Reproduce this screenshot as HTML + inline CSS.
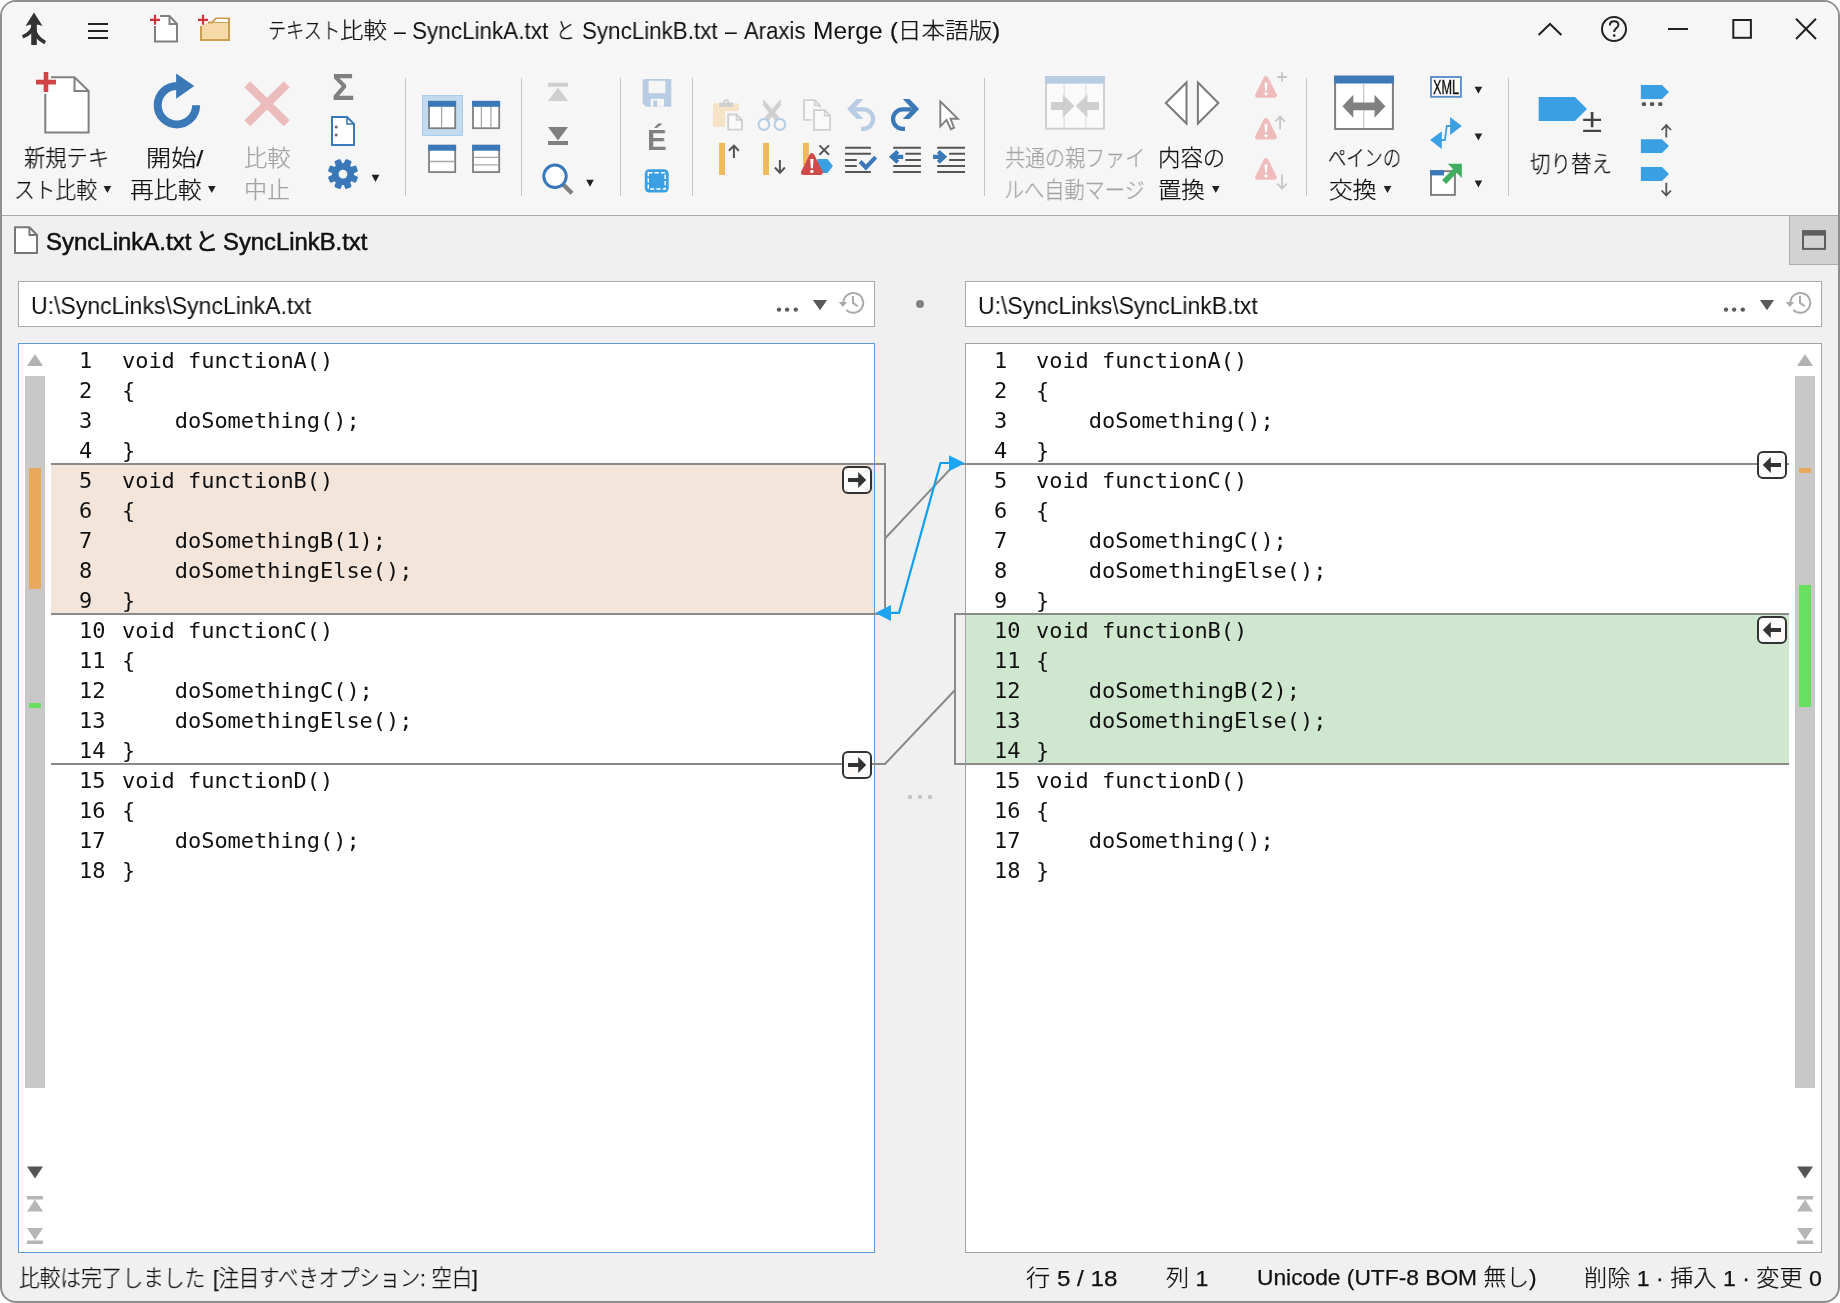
<!DOCTYPE html>
<html lang="ja">
<head>
<meta charset="utf-8">
<title>テキスト比較 – SyncLinkA.txt と SyncLinkB.txt – Araxis Merge (日本語版)</title>
<style>
html,body{margin:0;padding:0;background:#fff;}
body{width:1840px;height:1303px;overflow:hidden;position:relative;
  font-family:"Liberation Sans","Noto Sans CJK JP",sans-serif;color:#111;}
#win{position:absolute;left:0;top:0;width:1840px;height:1303px;box-sizing:border-box;
  border:2px solid #8f8f8f;border-radius:16px;background:#f0f0f0;overflow:hidden;}
#win *{box-sizing:border-box;}
.abs,#win div,#win span,#win svg{position:absolute;}
#top{left:0;top:0;width:1840px;height:216px;background:#f6f6f6;border-bottom:1px solid #ababab;}
#root{left:-2px;top:-2px;width:1840px;height:1303px;}
.t{white-space:pre;line-height:1;transform-origin:0 50%;will-change:transform;}
.ui{font-size:24px;}
.dis{color:#a6a6a6;}
.sep{width:1px;background:#c6c6c6;top:78px;height:118px;}
.mono{font-family:"DejaVu Sans Mono","Liberation Mono",monospace;font-size:22px;line-height:30px;white-space:pre;color:#111;letter-spacing:-0.045px;will-change:transform;}
.pane{background:#fff;border:1px solid #a3a3a3;}
.pathbox{background:#fff;border:1px solid #a9a9a9;height:46px;top:281px;}
.ln{height:2px;background:#8a8a8a;}
.vl{width:2px;background:#8a8a8a;}
.btn{width:30px;height:28px;border:2px solid #333;border-radius:6px;background:#fcfbfa;}
.track{background:#c8c8c8;width:20px;}
</style>
</head>
<body>
<div id="win"><div id="root">
<div id="top"></div>
<!-- ===== title bar icons ===== -->
<svg id="tbicons" style="left:0;top:0;" width="1840" height="60" viewBox="0 0 1840 60">
<!-- app icon : merge arrow -->
<g fill="none" stroke="#333" stroke-linecap="butt">
<path d="M34 22V45" stroke-width="5.6"/>
<path d="M22.600 36.900C29.500 34.300 33.300 30 34 23" stroke-width="3.600"/>
<path d="M45.200 42.600C38.600 39.400 35 35 34.300 28" stroke-width="3.600"/>
</g>
<path d="M34 12.6L42.5 26L38.5 24.8H29.5L25.5 26Z" fill="#333"/>
<!-- hamburger -->
<path d="M88 24H108M88 31H108M88 38H108" stroke="#222" stroke-width="2" fill="none"/>
<!-- new document -->
<path d="M155 26V41.5H177V24L169.5 16H160" fill="#fff"/>
<path d="M155 26V41.5H177V24L169.5 16H160" fill="none" stroke="#808080" stroke-width="2"/>
<path d="M169.5 16V24H177" fill="none" stroke="#808080" stroke-width="2"/>
<path d="M150 19.8H160M155 14.8V24.8" stroke="#d13438" stroke-width="2.2" fill="none"/>
<!-- new folder -->
<path d="M201 26V40H229V18.5H216L212 22.5H208" fill="#f5d9a8" stroke="#c9a052" stroke-width="2"/>
<path d="M216.5 18.5L212.5 22.5H228.5V20.5Q228.5 18.5 226.5 18.5Z" fill="#fff" stroke="#c9a052" stroke-width="1.2"/>
<path d="M198 19.8H208M203 14.8V24.8" stroke="#d13438" stroke-width="2.2" fill="none"/>
<!-- window controls -->
<g fill="none" stroke="#222" stroke-width="2">
<path d="M1538.6 35L1550 24L1561.4 35"/>
<circle cx="1614" cy="29" r="12"/>
<path d="M1668 29H1688"/>
<rect x="1733.3" y="20" width="17.6" height="17.8"/>
<path d="M1796 18.8L1816 39M1816 18.8L1796 39"/>
</g>
<path d="M1609.8 25.6C1609.8 22.6 1611.8 21.3 1614.2 21.3C1616.8 21.3 1618.4 22.8 1618.4 24.9C1618.4 28 1614.2 28.2 1614.2 32" fill="none" stroke="#222" stroke-width="1.9"/>
<circle cx="1614.2" cy="35.6" r="1.3" fill="#222"/>
</svg>
<!-- ===== ribbon separators ===== -->
<div class="sep" style="left:405px;"></div><div class="sep" style="left:521px;"></div><div class="sep" style="left:620px;"></div>
<div class="sep" style="left:692px;"></div><div class="sep" style="left:984px;"></div><div class="sep" style="left:1306px;"></div>
<div class="sep" style="left:1508px;"></div>
<!-- selected layout button background -->
<div style="left:422px;top:95px;width:41px;height:41px;background:#c2dbf0;border:1px solid #a6cdee;"></div>
<!-- ===== ribbon icons, part A ===== -->
<svg id="ribA" style="left:0;top:60px;" width="700" height="156" viewBox="0 60 700 156">
<!-- new text comparison -->
<path d="M45.3 94V132.600H88.600V91L74.500 77.300H51" fill="#fff" stroke="#808080" stroke-width="2"/>
<path d="M74.500 77.300V91H88.600" fill="none" stroke="#808080" stroke-width="2"/>
<path d="M36 82.100H56M46 72.100V92.100" stroke="#d04444" stroke-width="4.6" fill="none"/>
<!-- start / recompare -->
<path d="M176.900 86A19.200 19.200 0 1 0 196.100 105.200" fill="none" stroke="#3a78b8" stroke-width="8"/>
<path d="M176.100 73.500V98.800L194.300 86.100Z" fill="#3a78b8"/>
<!-- stop (disabled) -->
<path d="M247.300 84.300L286.800 123.300M286.800 84.300L247.300 123.300" stroke="#ecbcbc" stroke-width="8.400" fill="none"/>
<!-- dropdown arrows under labels -->
<path d="M103.600 186H111.200L107.400 193Z M208 186H215.600L211.800 193Z" fill="#222"/>
<!-- small doc with dots -->
<path d="M332 117V144.900H354V124L347 117Z" fill="#fff" stroke="#3a78b8" stroke-width="2"/>
<path d="M347 117V124H354" fill="none" stroke="#3a78b8" stroke-width="1.6"/>
<circle cx="336.200" cy="127" r="1.500" fill="#666"/><circle cx="336.200" cy="135" r="1.500" fill="#666"/>
<!-- gear -->
<g transform="translate(343 174.1)" fill="#3a78b8">
<circle r="11"/>
<rect x="-3.4" y="-15.2" width="6.8" height="8" rx="1.6" transform="rotate(22.5)"/><rect x="-3.4" y="-15.2" width="6.8" height="8" rx="1.6" transform="rotate(67.5)"/><rect x="-3.4" y="-15.2" width="6.8" height="8" rx="1.6" transform="rotate(112.5)"/><rect x="-3.4" y="-15.2" width="6.8" height="8" rx="1.6" transform="rotate(157.5)"/><rect x="-3.4" y="-15.2" width="6.8" height="8" rx="1.6" transform="rotate(202.5)"/><rect x="-3.4" y="-15.2" width="6.8" height="8" rx="1.6" transform="rotate(247.5)"/><rect x="-3.4" y="-15.2" width="6.8" height="8" rx="1.6" transform="rotate(292.5)"/><rect x="-3.4" y="-15.2" width="6.8" height="8" rx="1.6" transform="rotate(337.5)"/>
<circle r="4.4" fill="#f6f6f6"/>
</g>
<path d="M371.600 174.800H379.400L375.500 182Z" fill="#222"/>
<!-- layout icons -->
<g stroke="#808080" stroke-width="1.800" fill="#fff">
<rect x="429" y="101.800" width="26.200" height="26.400"/>
<rect x="473" y="101.800" width="26.200" height="26.400"/>
<rect x="429" y="145.700" width="26.200" height="26.400"/>
<rect x="473" y="145.700" width="26.200" height="26.400"/>
</g>
<g fill="#3a78b8">
<rect x="428.100" y="100.900" width="28" height="5.900"/><rect x="472.100" y="100.900" width="28" height="5.900"/>
<rect x="428.100" y="144.800" width="28" height="5.900"/><rect x="472.100" y="144.800" width="28" height="5.900"/>
</g>
<g stroke="#a8a8a8" stroke-width="1.300" fill="none">
<path d="M441.600 107V127.500"/><path d="M481.400 107V127.500M490.900 107V127.500"/>
<path d="M430 161.500H454.500"/><path d="M474 157.300H498.500M474 164.900H498.500"/>
</g>
<!-- previous/next difference -->
<path d="M548 82.800H568V86.700H548Z M558 87.400L568 100.900H548Z" fill="#cfcfcf"/>
<path d="M548 127H568L558 140.500Z M548 141.100H568V144.900H548Z" fill="#808080"/>
<!-- magnifier -->
<path d="M563 184.300L572 193.300" stroke="#808080" stroke-width="4.400" fill="none"/>
<circle cx="555" cy="176.300" r="11.200" fill="#fff" stroke="#3a78b8" stroke-width="3"/>
<path d="M586.200 179.800H593.800L590 186.800Z" fill="#222"/>
<!-- save (disabled) -->
<path d="M642.600 81.100Q642.600 79.100 644.600 79.100H671.300V106.700H646L642.600 103.500Z" fill="#b8cce4"/>
<rect x="648.600" y="80.800" width="16.800" height="12.400" fill="#f6f6f6"/>
<rect x="650.600" y="98.800" width="13.400" height="7.900" fill="#f6f6f6"/>
<rect x="653.200" y="100.600" width="4" height="6.100" fill="#b8cce4"/>
<!-- selection -->
<rect x="644.800" y="169.300" width="23.900" height="23.300" rx="4.500" fill="#3a9fe3"/>
<rect x="648.300" y="172.800" width="16.900" height="16.300" fill="none" stroke="#fff" stroke-width="1.500" stroke-dasharray="4.200 2.100"/>
</svg>
<!-- ===== ribbon icons, part B (edit group) ===== -->
<svg id="ribB" style="left:700px;top:60px;" width="300" height="156" viewBox="700 60 300 156">
<!-- paste (disabled) -->
<rect x="713" y="103.300" width="25.800" height="23.500" rx="1.500" fill="#f6e3c6"/>
<path d="M719.200 107V102.500H723.200Q723.200 99.200 726.200 99.200Q729.200 99.200 729.200 102.500H733.100V107Z" fill="#cfcfcf"/>
<circle cx="726.200" cy="102.100" r="1" fill="#f0f0f0"/>
<rect x="725.200" y="111" width="15" height="17" fill="#f6f6f6"/>
<path d="M728.200 114.500H736.500L741.900 119.900V129.700H728.200Z" fill="#fafafa" stroke="#cfcfcf" stroke-width="1.800"/>
<path d="M736.500 114.500V119.900H741.900" fill="none" stroke="#cfcfcf" stroke-width="1.600"/>
<!-- cut (disabled) -->
<path d="M763.100 99.100V105.600L775.400 121L779.600 117.800Z" fill="#d0d0d0"/>
<path d="M780.800 99.100V105.600L768.500 121L764.300 117.800Z" fill="#d0d0d0"/>
<circle cx="763.900" cy="124.500" r="5.400" fill="#f6f6f6" stroke="#b4cde6" stroke-width="2"/>
<circle cx="779.900" cy="124.500" r="5.400" fill="#f6f6f6" stroke="#b4cde6" stroke-width="2"/>
<!-- copy (disabled) -->
<path d="M804.100 100.100H814.600L820 105.500V119.900H804.100Z" fill="#fafafa" stroke="#cfcfcf" stroke-width="1.800"/>
<path d="M814.600 100.100V105.500H820" fill="none" stroke="#cfcfcf" stroke-width="1.600"/>
<path d="M814.100 110.100H824.600L830.100 115.600V129.800H814.100Z" fill="#f6f6f6" stroke="#f6f6f6" stroke-width="5.200"/>
<path d="M814.100 110.100H824.600L830.100 115.600V129.800H814.100Z" fill="#fafafa" stroke="#cfcfcf" stroke-width="1.800"/>
<path d="M824.600 110.100V115.600H830.100" fill="none" stroke="#cfcfcf" stroke-width="1.600"/>
<!-- undo (disabled) -->
<path d="M854.300 109.300H863.300A9.800 9.800 0 0 1 863.300 128.900H861.100" fill="none" stroke="#b8cce4" stroke-width="4.200"/>
<path d="M863.400 99.100H856.700L847.100 109L856.700 118.900H863.400L853.800 109Z" fill="#b8cce4"/>
<!-- redo -->
<path d="M911.800 109.300H902.800A9.800 9.800 0 0 0 902.800 128.900H905" fill="none" stroke="#3a78b8" stroke-width="4.200"/>
<path d="M902.800 99.100H909.500L919.100 109L909.500 118.900H902.800L912.400 109Z" fill="#3a78b8"/>
<!-- pointer -->
<path d="M940.300 101.500L957.900 118.800H950.500L954.100 127.700L950.900 129.200L946.500 119.900L940.300 126.300Z" fill="#fff" stroke="#808080" stroke-width="1.900" stroke-linejoin="miter"/>
<!-- row 2 -->
<g fill="#f0b95c">
<rect x="719.100" y="142.800" width="5.900" height="32.200"/>
<rect x="763.100" y="142.800" width="5.900" height="32.200"/>
<rect x="803" y="142.800" width="5.900" height="22.500"/>
</g>
<g fill="none" stroke="#555" stroke-width="2">
<path d="M733.900 158V146M728.900 150.800L733.900 145.600L738.900 150.800"/>
<path d="M779.900 160V172M774.900 167.500L779.900 172.700L784.900 167.500"/>
<path d="M819.400 145.400L829 154.700M829 145.400L819.400 154.700"/>
</g>
<path d="M817.400 159.100H827.500L832.900 166L827.500 172.900H817.400Z" fill="#3a9fe3"/>
<path d="M811.900 155.700L820.300 172.400H803.500Z" fill="#d14a4a" stroke="#d14a4a" stroke-width="5" stroke-linejoin="round"/>
<path d="M810.300 159H813.500L812.900 168.300H810.900Z" fill="#fff"/><circle cx="811.900" cy="171.400" r="1.700" fill="#fff"/>
<g fill="none" stroke="#555" stroke-width="2">
<path d="M845.100 147.700H870.900M845.100 153.700H870.900M845.100 159.900H856.800M845.100 165.900H856.800M845.100 172.100H870.900"/>
<path d="M893.200 147.700H920.900M905.400 153.700H920.900M905.400 159.900H920.900M893.200 165.900H920.900M893.200 172.100H920.900"/>
<path d="M937.200 147.700H965M949.100 153.700H965M949.100 159.900H965M937.200 165.900H965M937.200 172.100H965"/>
</g>
<path d="M860.100 161.500L865.900 167.400L875.700 157.100" fill="none" stroke="#3a78b8" stroke-width="4.200"/>
<path d="M888.900 156.800L896.400 149.900L899.300 152.900L897.300 154.700H903.200V158.900H897.300L899.300 160.700L896.400 163.700Z" fill="#3a78b8"/>
<path d="M947.200 156.800L939.700 149.900L936.800 152.900L938.800 154.700H933V158.900H938.800L936.800 160.700L939.700 163.700Z" fill="#3a78b8"/>
</svg>
<!-- ===== ribbon icons, part C (merge / panes / bookmarks) ===== -->
<svg id="ribC" style="left:1000px;top:60px;" width="720" height="156" viewBox="1000 60 720 156">
<!-- auto-merge (disabled) -->
<rect x="1046" y="77" width="58" height="51.700" fill="#fafafa" stroke="#d0d0d0" stroke-width="2"/>
<rect x="1045" y="76" width="60" height="7.700" fill="#b8cce4"/>
<path d="M1064.200 84V128M1085.700 84V128" stroke="#e2e2e2" stroke-width="1.400" fill="none"/>
<path d="M1051 102H1062.800V94.500L1074.400 106L1062.800 117.400V110H1051Z" fill="#cfcfcf"/>
<path d="M1099 102H1087.400V94.500L1075.800 106L1087.400 117.400V110H1099Z" fill="#cfcfcf"/>
<!-- replace contents -->
<path d="M1186.500 82.500V123.500L1165.800 103Z" fill="#fff" stroke="#7a7a7a" stroke-width="2" stroke-linejoin="miter"/>
<path d="M1197.900 82.500V123.500L1218.400 103Z" fill="#fff" stroke="#7a7a7a" stroke-width="2" stroke-linejoin="miter"/>
<path d="M1212 186H1219.600L1215.800 193Z" fill="#222"/>
<!-- conflict icons (disabled) -->
<g fill="#efbcbc" stroke="#efbcbc" stroke-width="5" stroke-linejoin="round">
<path d="M1266 78.700L1274.400 95.300H1257.600Z"/><path d="M1266 120.500L1274.400 137.100H1257.600Z"/><path d="M1266 160.700L1274.400 177.300H1257.600Z"/>
</g>
<g fill="#fff">
<path d="M1264.600 82.500H1267.400L1266.900 90.500H1265.100Z"/><circle cx="1266" cy="93.800" r="1.600"/>
<path d="M1264.600 124.300H1267.400L1266.900 132.300H1265.100Z"/><circle cx="1266" cy="135.600" r="1.600"/>
<path d="M1264.600 164.500H1267.400L1266.900 172.500H1265.100Z"/><circle cx="1266" cy="175.800" r="1.600"/>
</g>
<g fill="none" stroke="#c6c6c6" stroke-width="1.800">
<path d="M1277.300 77H1286.900M1282.100 72.200V81.800"/>
<path d="M1280.100 129.600V117M1275.400 121.500L1280.100 116.600L1284.800 121.500"/>
<path d="M1282 174.600V188M1277.300 183.600L1282 188.500L1286.700 183.600"/>
</g>
<!-- swap panes -->
<rect x="1335.100" y="76.700" width="57.800" height="52.300" fill="#fff" stroke="#808080" stroke-width="2"/>
<rect x="1334.100" y="75.700" width="59.800" height="7.800" fill="#3a78b8"/>
<path d="M1363.700 84V128" stroke="#c8c8c8" stroke-width="1.300" fill="none"/>
<path d="M1342.400 106.300L1353.300 94.800V102.400H1374.500V94.800L1385.400 106.300L1374.500 117.800V110.300H1353.300V117.800Z" fill="#808080"/>
<path d="M1383.700 186H1391.300L1387.500 193Z" fill="#222"/>
<!-- XML -->
<rect x="1431" y="77" width="29.900" height="19.800" fill="#fff" stroke="#5b8fc9" stroke-width="1.900"/>
<!-- sync link arrows -->
<path d="M1461.800 126L1450.100 117.100V134.900Z M1430.100 140.100L1441.800 131.300V149Z" fill="#3a9fe3"/>
<path d="M1451 126H1446.800L1444.900 140.100H1441" fill="none" stroke="#3a9fe3" stroke-width="1.800"/>
<!-- open window -->
<rect x="1431" y="171.200" width="23.900" height="23.700" fill="#fff" stroke="#808080" stroke-width="2"/>
<rect x="1430" y="170.200" width="14" height="5.200" fill="#3a78b8"/>
<path d="M1444.100 182L1456.500 169.400" stroke="#3fae5e" stroke-width="5.600" fill="none"/>
<path d="M1461.800 163.700V177.900L1447.900 163.700Z" fill="#3fae5e"/>
<path d="M1474.600 86.700H1482.200L1478.400 93.700Z M1474.600 133.500H1482.200L1478.400 140.500Z M1474.600 180.600H1482.200L1478.400 187.600Z" fill="#222"/>
<!-- toggle bookmark -->
<path d="M1538.700 97H1575L1587 109L1575 120.900H1538.700Z" fill="#3a9fe3"/>
<!-- bookmark small icons -->
<g fill="#3a9fe3">
<path d="M1640.900 85H1662L1669 92L1662 99.100H1640.900Z"/>
<path d="M1640.900 139.300H1662L1669 146.100L1662 153H1640.900Z"/>
<path d="M1640.900 167H1662L1669 174L1662 180.900H1640.900Z"/>
</g>
<g fill="#555"><rect x="1641.800" y="102.200" width="4.200" height="3.800" rx="1.200"/><rect x="1650" y="102.200" width="4.200" height="3.800" rx="1.200"/><rect x="1658.200" y="102.200" width="4.200" height="3.800" rx="1.200"/></g>
<g fill="none" stroke="#555" stroke-width="1.800">
<path d="M1666.300 137.600V125.500M1661.600 130L1666.300 125.100L1671 130"/>
<path d="M1666.300 182.800V195.200M1661.600 190.500L1666.300 195.400L1671 190.500"/>
</g>
</svg>
<!-- ===== document tab strip ===== -->
<div style="left:1789px;top:216px;width:51px;height:49px;background:#d2d2d2;border-left:1px solid #adadad;border-bottom:1px solid #adadad;"></div>
<svg style="left:0;top:216px;" width="1840" height="50" viewBox="0 216 1840 50">
<path d="M15 227.3H29.5L37 235V253H15Z" fill="#fff" stroke="#777" stroke-width="2"/>
<path d="M29.5 227.3V235H37" fill="none" stroke="#777" stroke-width="2"/>
<rect x="1803" y="233" width="22" height="15.900" fill="none" stroke="#5f5f5f" stroke-width="2"/>
<rect x="1802" y="230.100" width="24" height="5.500" fill="#5f5f5f"/>
</svg>
<!-- ===== path boxes ===== -->
<div class="pathbox" style="left:18px;width:857px;"></div>
<div class="pathbox" style="left:965px;width:857px;"></div>
<svg style="left:0;top:281px;" width="1840" height="46" viewBox="0 281 1840 46">
<g fill="#5a5a5a">
<circle cx="779" cy="309.600" r="2.200"/><circle cx="787.100" cy="309.600" r="2.200"/><circle cx="795.800" cy="309.600" r="2.200"/>
<circle cx="1726" cy="309.600" r="2.200"/><circle cx="1734.100" cy="309.600" r="2.200"/><circle cx="1742.800" cy="309.600" r="2.200"/>
<path d="M812.900 300H827.100L820 310.200Z M1759.900 300H1774.100L1767 310.200Z"/>
</g>
<g fill="none" stroke="#ababab" stroke-width="2">
<path d="M843.400 302.900A9.900 9.900 0 1 1 846.300 309.900"/>
<path d="M853 296.100V302.900L857.700 306.300"/>
<path d="M1790.400 302.900A9.900 9.900 0 1 1 1793.300 309.900"/>
<path d="M1800 296.100V302.900L1804.700 306.300"/>
</g>
<path d="M838.700 301.900H847.100L842.900 306.900Z M1785.700 301.900H1794.100L1789.900 306.900Z" fill="#ababab"/>
</svg>
<!-- ===== PANES ===== -->
<div class="pane" id="lp" style="left:18px;top:343px;width:857px;height:910px;border-color:#5b9ad5;"></div>
<div class="pane" id="rp" style="left:965px;top:343px;width:857px;height:910px;"></div>
<div style="left:51px;top:465px;width:823px;height:148px;background:#f3e5d9;"></div>
<div style="left:966px;top:615px;width:823px;height:148px;background:#d0e7cf;"></div>
<span class="mono" style="left:79px;top:346px;">1</span><span class="mono" style="left:121.5px;top:346px;">void functionA()</span>
<span class="mono" style="left:79px;top:376px;">2</span><span class="mono" style="left:121.5px;top:376px;">{</span>
<span class="mono" style="left:79px;top:406px;">3</span><span class="mono" style="left:121.5px;top:406px;">    doSomething();</span>
<span class="mono" style="left:79px;top:436px;">4</span><span class="mono" style="left:121.5px;top:436px;">}</span>
<span class="mono" style="left:79px;top:466px;">5</span><span class="mono" style="left:121.5px;top:466px;">void functionB()</span>
<span class="mono" style="left:79px;top:496px;">6</span><span class="mono" style="left:121.5px;top:496px;">{</span>
<span class="mono" style="left:79px;top:526px;">7</span><span class="mono" style="left:121.5px;top:526px;">    doSomethingB(1);</span>
<span class="mono" style="left:79px;top:556px;">8</span><span class="mono" style="left:121.5px;top:556px;">    doSomethingElse();</span>
<span class="mono" style="left:79px;top:586px;">9</span><span class="mono" style="left:121.5px;top:586px;">}</span>
<span class="mono" style="left:79px;top:616px;">10</span><span class="mono" style="left:121.5px;top:616px;">void functionC()</span>
<span class="mono" style="left:79px;top:646px;">11</span><span class="mono" style="left:121.5px;top:646px;">{</span>
<span class="mono" style="left:79px;top:676px;">12</span><span class="mono" style="left:121.5px;top:676px;">    doSomethingC();</span>
<span class="mono" style="left:79px;top:706px;">13</span><span class="mono" style="left:121.5px;top:706px;">    doSomethingElse();</span>
<span class="mono" style="left:79px;top:736px;">14</span><span class="mono" style="left:121.5px;top:736px;">}</span>
<span class="mono" style="left:79px;top:766px;">15</span><span class="mono" style="left:121.5px;top:766px;">void functionD()</span>
<span class="mono" style="left:79px;top:796px;">16</span><span class="mono" style="left:121.5px;top:796px;">{</span>
<span class="mono" style="left:79px;top:826px;">17</span><span class="mono" style="left:121.5px;top:826px;">    doSomething();</span>
<span class="mono" style="left:79px;top:856px;">18</span><span class="mono" style="left:121.5px;top:856px;">}</span>
<span class="mono" style="left:993.5px;top:346px;">1</span><span class="mono" style="left:1036px;top:346px;">void functionA()</span>
<span class="mono" style="left:993.5px;top:376px;">2</span><span class="mono" style="left:1036px;top:376px;">{</span>
<span class="mono" style="left:993.5px;top:406px;">3</span><span class="mono" style="left:1036px;top:406px;">    doSomething();</span>
<span class="mono" style="left:993.5px;top:436px;">4</span><span class="mono" style="left:1036px;top:436px;">}</span>
<span class="mono" style="left:993.5px;top:466px;">5</span><span class="mono" style="left:1036px;top:466px;">void functionC()</span>
<span class="mono" style="left:993.5px;top:496px;">6</span><span class="mono" style="left:1036px;top:496px;">{</span>
<span class="mono" style="left:993.5px;top:526px;">7</span><span class="mono" style="left:1036px;top:526px;">    doSomethingC();</span>
<span class="mono" style="left:993.5px;top:556px;">8</span><span class="mono" style="left:1036px;top:556px;">    doSomethingElse();</span>
<span class="mono" style="left:993.5px;top:586px;">9</span><span class="mono" style="left:1036px;top:586px;">}</span>
<span class="mono" style="left:993.5px;top:616px;">10</span><span class="mono" style="left:1036px;top:616px;">void functionB()</span>
<span class="mono" style="left:993.5px;top:646px;">11</span><span class="mono" style="left:1036px;top:646px;">{</span>
<span class="mono" style="left:993.5px;top:676px;">12</span><span class="mono" style="left:1036px;top:676px;">    doSomethingB(2);</span>
<span class="mono" style="left:993.5px;top:706px;">13</span><span class="mono" style="left:1036px;top:706px;">    doSomethingElse();</span>
<span class="mono" style="left:993.5px;top:736px;">14</span><span class="mono" style="left:1036px;top:736px;">}</span>
<span class="mono" style="left:993.5px;top:766px;">15</span><span class="mono" style="left:1036px;top:766px;">void functionD()</span>
<span class="mono" style="left:993.5px;top:796px;">16</span><span class="mono" style="left:1036px;top:796px;">{</span>
<span class="mono" style="left:993.5px;top:826px;">17</span><span class="mono" style="left:1036px;top:826px;">    doSomething();</span>
<span class="mono" style="left:993.5px;top:856px;">18</span><span class="mono" style="left:1036px;top:856px;">}</span>
<!-- ===== separators, brackets and link lines ===== -->
<svg id="links" style="left:0;top:0;" width="1840" height="1303" viewBox="0 0 1840 1303">
<g fill="none" stroke="#8a8a8a" stroke-width="2">
<path d="M51 464H885V614H51"/>
<path d="M51 764H885L955 690"/>
<path d="M885 538.5L955 464H1789"/>
<path d="M1789 614H955V764H1789"/>
</g>
<path d="M949 463H940.5L899 612.800H891" fill="none" stroke="#0f9ff0" stroke-width="2.200"/>
<path d="M965 463.200L949 455.200V471.200Z" fill="#1ea4f0"/>
<path d="M875.200 613L891 605V621Z" fill="#1ea4f0"/>
</svg>
<!-- ===== scrollbars / overview strips ===== -->
<div class="track" style="left:25px;top:376px;height:712px;"></div>
<svg style="left:25px;top:350px;" width="20" height="20" viewBox="0 0 20 20"><path d="M2 16L10 4L18 16Z" fill="#b2b2b2"/></svg>
<svg style="left:25px;top:1162px;" width="20" height="90" viewBox="0 0 20 90"><path d="M2 4.5H18L10 16.5Z" fill="#555"/><path d="M2 34H18V37.5H2Z M10 37.5L18 49.5H2Z" fill="#b6b6b6"/><path d="M2 66H18L10 78Z M2 78.5H18V82H2Z" fill="#b6b6b6"/></svg>
<div class="track" style="left:1795px;top:376px;height:712px;"></div>
<svg style="left:1795px;top:350px;" width="20" height="20" viewBox="0 0 20 20"><path d="M2 16L10 4L18 16Z" fill="#b2b2b2"/></svg>
<svg style="left:1795px;top:1162px;" width="20" height="90" viewBox="0 0 20 90"><path d="M2 4.5H18L10 16.5Z" fill="#555"/><path d="M2 34H18V37.5H2Z M10 37.5L18 49.5H2Z" fill="#b6b6b6"/><path d="M2 66H18L10 78Z M2 78.5H18V82H2Z" fill="#b6b6b6"/></svg>
<div style="left:29px;top:468px;width:12px;height:121px;background:#eaa75e;"></div>
<div style="left:29px;top:703px;width:12px;height:5px;background:#67df5f;"></div>
<div style="left:1799px;top:468px;width:12px;height:5px;background:#eaa75e;"></div>
<div style="left:1799px;top:585px;width:12px;height:122px;background:#67df5f;"></div>
<!-- ===== merge buttons ===== -->
<div class="btn" style="left:842px;top:466px;"><svg style="left:0;top:0;" width="26" height="24" viewBox="0 0 26 24"><path d="M4 10.1H14.2V4L22.2 12L14.2 20V13.9H4Z" fill="#333"/></svg></div>
<div class="btn" style="left:842px;top:751px;"><svg style="left:0;top:0;" width="26" height="24" viewBox="0 0 26 24"><path d="M4 10.1H14.2V4L22.2 12L14.2 20V13.9H4Z" fill="#333"/></svg></div>
<div class="btn" style="left:1757px;top:451px;"><svg style="left:0;top:0;" width="26" height="24" viewBox="0 0 26 24"><path d="M22 10.1H11.8V4L3.8 12L11.8 20V13.9H22Z" fill="#333"/></svg></div>
<div class="btn" style="left:1757px;top:616px;"><svg style="left:0;top:0;" width="26" height="24" viewBox="0 0 26 24"><path d="M22 10.1H11.8V4L3.8 12L11.8 20V13.9H22Z" fill="#333"/></svg></div>
<div style="left:916px;top:300px;width:8px;height:8px;border-radius:4px;background:#838383;"></div>
<div style="left:908px;top:795px;width:4px;height:4px;border-radius:1px;background:#c6c6c6;"></div>
<div style="left:918px;top:795px;width:4px;height:4px;border-radius:1px;background:#c6c6c6;"></div>
<div style="left:928px;top:795px;width:4px;height:4px;border-radius:1px;background:#c6c6c6;"></div>
<!-- ===== fitted text labels ===== -->
<span class="t" style="left:267.6px;top:20.0px;font-size:21.849999999999998px;font-weight:300;transform:scaleX(0.8305);-webkit-text-stroke:0.25px #111;">テキスト</span>
<span class="t" style="left:339.9px;top:20.2px;font-size:21.849999999999998px;font-weight:300;transform:scaleX(1.0714);-webkit-text-stroke:0.25px #111;">比較</span>
<span class="t" style="left:393.8px;top:19.5px;font-size:23px;transform:scaleX(0.9077);">–</span>
<span class="t" style="left:412.2px;top:20.0px;font-size:23px;transform:scaleX(0.9777);">SyncLinkA.txt</span>
<span class="t" style="left:556.4px;top:20.0px;font-size:21.849999999999998px;font-weight:300;transform:scaleX(0.8667);-webkit-text-stroke:0.25px #111;">と</span>
<span class="t" style="left:581.6px;top:20.0px;font-size:23px;transform:scaleX(0.9727);">SyncLinkB.txt</span>
<span class="t" style="left:725.4px;top:19.5px;font-size:23px;transform:scaleX(0.8923);">–</span>
<span class="t" style="left:744.0px;top:20.0px;font-size:23px;transform:scaleX(0.9609);">Araxis</span>
<span class="t" style="left:812.7px;top:19.5px;font-size:23px;transform:scaleX(1.0667);">Merge</span>
<span class="t" style="left:889.5px;top:19.7px;font-size:21.849999999999998px;font-weight:300;transform:scaleX(1.0800);-webkit-text-stroke:0.25px #111;">(日本語版)</span>
<span class="t" style="left:23.9px;top:147.8px;font-size:22.325px;font-weight:300;transform:scaleX(0.9547);-webkit-text-stroke:0.25px #111;">新規テキ</span>
<span class="t" style="left:13.6px;top:179.9px;font-size:22.325px;font-weight:300;transform:scaleX(0.9299);-webkit-text-stroke:0.25px #111;">スト比較</span>
<span class="t" style="left:146.3px;top:148.2px;font-size:22.325px;font-weight:300;transform:scaleX(1.1286);-webkit-text-stroke:0.25px #111;">開始/</span>
<span class="t" style="left:130.0px;top:179.9px;font-size:22.325px;font-weight:300;transform:scaleX(1.0677);-webkit-text-stroke:0.25px #111;">再比較</span>
<span class="t" style="left:244.2px;top:147.8px;font-size:22.325px;font-weight:300;color:#a3a3a3;transform:scaleX(1.0442);-webkit-text-stroke:0.25px #a3a3a3;">比較</span>
<span class="t" style="left:243.9px;top:180.4px;font-size:22.325px;font-weight:300;color:#a3a3a3;transform:scaleX(1.0357);-webkit-text-stroke:0.25px #a3a3a3;">中止</span>
<span class="t" style="left:1005.1px;top:147.8px;font-size:22.325px;font-weight:300;color:#a3a3a3;transform:scaleX(0.8980);-webkit-text-stroke:0.25px #a3a3a3;">共通の親ファイ</span>
<span class="t" style="left:1004.2px;top:179.9px;font-size:22.325px;font-weight:300;color:#a3a3a3;transform:scaleX(0.9033);-webkit-text-stroke:0.25px #a3a3a3;">ルへ自動マージ</span>
<span class="t" style="left:1158.2px;top:147.8px;font-size:22.325px;font-weight:300;transform:scaleX(1.0032);-webkit-text-stroke:0.25px #111;">内容の</span>
<span class="t" style="left:1158.3px;top:179.9px;font-size:22.325px;font-weight:300;transform:scaleX(1.0465);-webkit-text-stroke:0.25px #111;">置換</span>
<span class="t" style="left:1327.5px;top:147.7px;font-size:22.325px;font-weight:300;transform:scaleX(0.8195);-webkit-text-stroke:0.25px #111;">ペインの</span>
<span class="t" style="left:1329.3px;top:179.9px;font-size:22.325px;font-weight:300;transform:scaleX(1.0628);-webkit-text-stroke:0.25px #111;">交換</span>
<span class="t" style="left:1530.4px;top:154.2px;font-size:22.325px;font-weight:300;transform:scaleX(0.9193);-webkit-text-stroke:0.25px #111;">切り替え</span>
<span class="t" style="left:45.5px;top:230.5px;font-size:23.5px;transform:scaleX(1.0211);-webkit-text-stroke:0.55px #111;">SyncLinkA.txt</span>
<span class="t" style="left:195.0px;top:231.2px;font-size:23.5px;transform:scaleX(1.0000);-webkit-text-stroke:0.4px #111;">と</span>
<span class="t" style="left:222.5px;top:230.5px;font-size:23.5px;transform:scaleX(1.0141);-webkit-text-stroke:0.55px #111;">SyncLinkB.txt</span>
<span class="t" style="left:30.8px;top:295.2px;font-size:23.5px;transform:scaleX(0.9796);">U:\SyncLinks\SyncLinkA.txt</span>
<span class="t" style="left:977.8px;top:295.2px;font-size:23.5px;transform:scaleX(0.9779);">U:\SyncLinks\SyncLinkB.txt</span>
<span class="t" style="left:19.3px;top:1268.3px;font-size:22.325px;font-weight:300;transform:scaleX(0.9273);-webkit-text-stroke:0.25px #111;">比較は完了しました</span>
<span class="t" style="left:213.0px;top:1267.6px;font-size:22.325px;font-weight:300;transform:scaleX(0.9097);-webkit-text-stroke:0.25px #111;">[注目すべきオプション: 空白]</span>
<span class="t" style="left:1026.4px;top:1268.3px;font-size:22.325px;font-weight:300;transform:scaleX(1.0843);-webkit-text-stroke:0.25px #111;">行 5 / 18</span>
<span class="t" style="left:1166.0px;top:1267.8px;font-size:22.325px;font-weight:300;transform:scaleX(1.0375);-webkit-text-stroke:0.25px #111;">列 1</span>
<span class="t" style="left:1256.5px;top:1267.0px;font-size:22.325px;font-weight:300;transform:scaleX(1.0202);-webkit-text-stroke:0.25px #111;">Unicode (UTF-8 BOM 無し)</span>
<span class="t" style="left:1584.0px;top:1268.3px;font-size:22.325px;font-weight:300;transform:scaleX(1.0373);-webkit-text-stroke:0.25px #111;">削除 1 · 挿入 1 · 変更 0</span>
<!-- ===== glyph icons ===== -->
<span class="t" style="left:332.0px;top:69.0px;font-size:37px;font-weight:700;color:#808080;transform:scaleX(1.0050);">Σ</span>
<span class="t" style="left:646.7px;top:125.4px;font-size:30px;font-weight:700;color:#808080;transform:scaleX(0.9824);">É</span>
<span class="t" style="left:1433.2px;top:77.0px;font-size:20px;transform:scaleX(0.6341);-webkit-text-stroke:0.35px #111;">XML</span>
<span class="t" style="left:1581.5px;top:102.9px;font-size:34px;color:#444;transform:scaleX(1.0824);">±</span>
</div></div>
</body>
</html>
